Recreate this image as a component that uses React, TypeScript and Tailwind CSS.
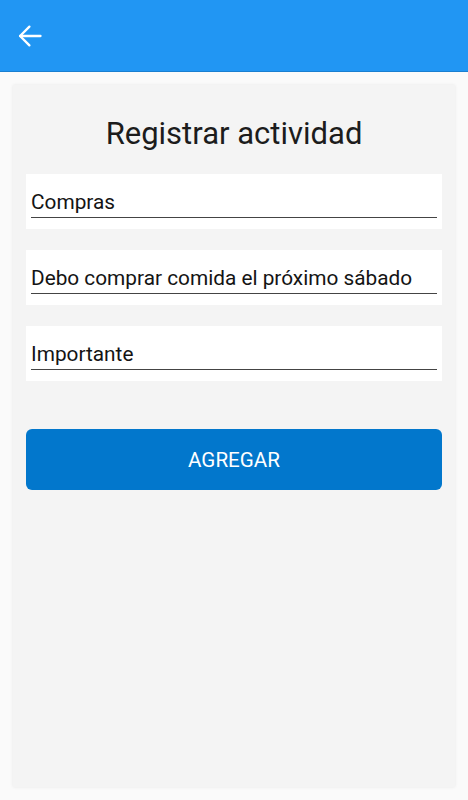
import React from 'react';

const fields = ['Compras', 'Debo comprar comida el próximo sábado', 'Importante'];

function BackArrow() {
  return (
    <svg width="28" height="28" viewBox="0 0 24 24" fill="none" stroke="white" strokeWidth="2" strokeLinecap="round" strokeLinejoin="round">
      <path d="M21 12H3.5" />
      <path d="M11.5 4L3.5 12l8 8" />
    </svg>
  );
}

export default function App() {
  return (
    <div className="min-h-[800px] bg-[#fafafa] font-['Roboto',sans-serif] flex flex-col">
      {/* App bar */}
      <header className="h-[72px] bg-[#2196f3] border-b border-[#1a7fd0] flex items-center pl-[16px]">
        <BackArrow />
      </header>

      {/* Card */}
      <main className="mx-[13px] mt-[13px] mb-[13px] h-[702px] bg-[#f4f4f4] shadow-[0_0_3px_rgba(0,0,0,0.08)] px-[13px] pt-[29px]">
        <h1 className="text-center text-[31px] leading-[40px] text-[#1c1c1c]">Registrar actividad</h1>

        <div className="mt-[20px] flex flex-col gap-[21px]">
          {fields.map(f => (
            <div key={f} className="h-[55px] bg-white px-[5px] pt-[15px]">
              <div className="border-b border-[#444] h-[29px] text-[20.8px] leading-[26px] text-[#141414]">
                {f}
              </div>
            </div>
          ))}
        </div>

        <button className="mt-[48px] w-full h-[61px] rounded-[6px] bg-[#0277cc] text-white text-[20.6px] pt-[2px]">
          AGREGAR
        </button>
      </main>
    </div>
  );
}
